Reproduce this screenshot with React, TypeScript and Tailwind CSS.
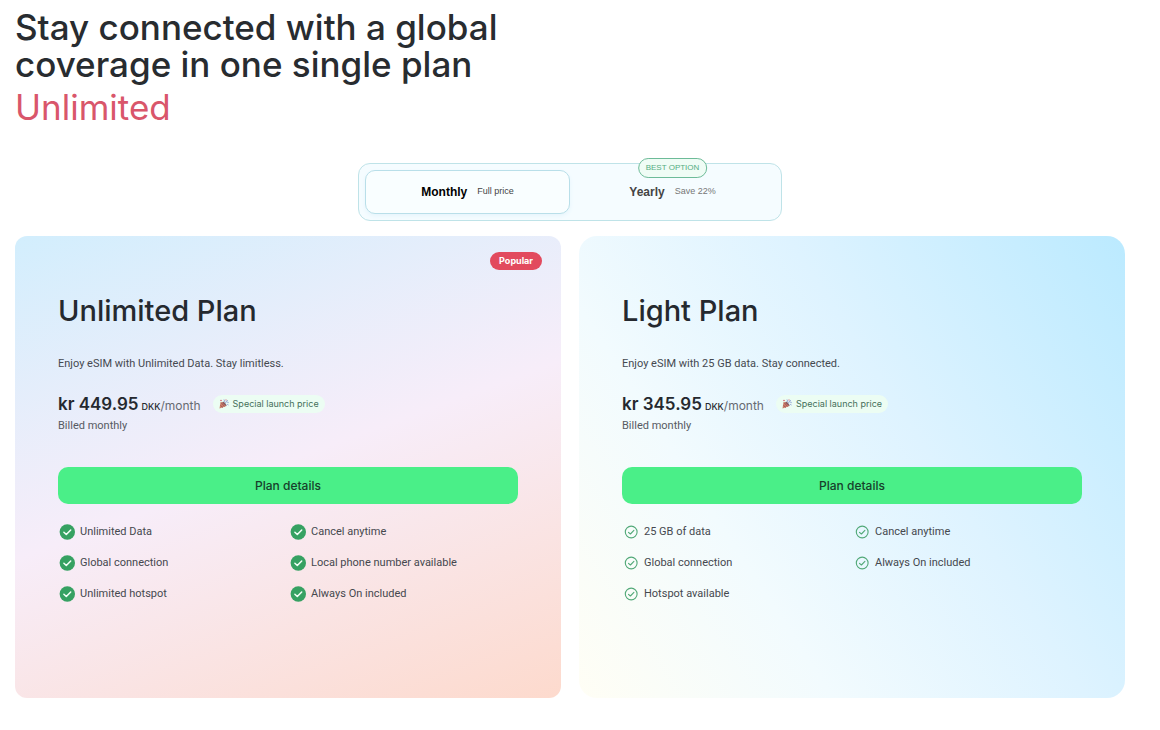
import { useState } from "react";
import clsx from "clsx";

type Plan = {
  name: string;
  description: string;
  price: string;
  popular?: boolean;
  features: string[];
};

const PLANS: Plan[] = [
  {
    name: "Unlimited Plan",
    description: "Enjoy eSIM with Unlimited Data. Stay limitless.",
    price: "kr 449.95",
    popular: true,
    features: [
      "Unlimited Data",
      "Cancel anytime",
      "Global connection",
      "Local phone number available",
      "Unlimited hotspot",
      "Always On included",
    ],
  },
  {
    name: "Light Plan",
    description: "Enjoy eSIM with 25 GB data. Stay connected.",
    price: "kr 345.95",
    features: [
      "25 GB of data",
      "Cancel anytime",
      "Global connection",
      "Always On included",
      "Hotspot available",
    ],
  },
];

const PERIODS = [
  { value: "monthly", label: "Monthly", note: "Full price" },
  { value: "yearly", label: "Yearly", note: "Save 22%", badge: "BEST OPTION" },
];

function SolidCheck() {
  return (
    <svg viewBox="0 0 16 16" className="size-4 shrink-0" aria-hidden="true">
      <circle cx="8.3" cy="8" r="7.7" fill="#36a162" />
      <path d="M4.9 8.2 7.3 10.5 11.7 6" fill="none" stroke="#f3fff7" strokeWidth="1.5" strokeLinecap="round" strokeLinejoin="round" />
    </svg>
  );
}

function OutlineCheck() {
  return (
    <svg viewBox="0 0 14 14" className="size-3.5 shrink-0" aria-hidden="true">
      <circle cx="7.2" cy="7" r="5.9" fill="none" stroke="#52a978" strokeWidth="1.1" />
      <path d="M4.5 7.3 6.4 9 9.9 5.4" fill="none" stroke="#52a978" strokeWidth="1.1" strokeLinecap="round" strokeLinejoin="round" />
    </svg>
  );
}

function PartyPopper() {
  return (
    <svg viewBox="0 0 20 20" className="size-2.5 shrink-0" aria-hidden="true">
      <path d="M1 19 3 6Q13 6 15 14Z" fill="#c98068" />
      <path d="M3 13 8 17M5 8l6 7" stroke="#a8525a" strokeWidth="2" />
      <path d="M7 6Q9 4 12 8t3 6Q12 13 9 10T7 6Z" fill="#8a5a60" />
      <path d="M10 6Q12 4 10 1M13 9q0-5 5-6M15 12q2-2 4 0" fill="none" stroke="#8ea0d6" strokeWidth="2" />
      <circle cx="4" cy="3" r="1.6" fill="#cf5a6a" />
      <circle cx="14" cy="2" r="1.3" fill="#d9838f" />
      <circle cx="18" cy="7" r="1.3" fill="#8ea0d6" />
    </svg>
  );
}

function PlanCard({ plan }: { plan: Plan }) {
  return (
    <article
      className={clsx(
        "relative px-[43px] pt-[57px] pb-24",
        plan.popular
          ? "rounded-xl bg-[linear-gradient(160deg,#d2eefd_0%,#f7edf9_49%,#fddacd_100%)]"
          : "rounded-[18px] bg-[linear-gradient(57deg,#fffef5_0%,#f2fbfe_30%,#def3ff_60%,#bbeaff_100%)]"
      )}
    >
      {plan.popular && (
        <span className="absolute top-4 right-[19px] rounded-full bg-[#e24a5e] px-[9px] text-[9px] leading-[18px] font-bold text-white">
          Popular
        </span>
      )}

      <h2 className="text-[29px] leading-9 font-medium text-[#25292f]">{plan.name}</h2>
      <p className="mt-[27px] font-['Roboto',sans-serif] text-[11px] leading-4 text-[#454950]">{plan.description}</p>

      <div className="mt-5 flex items-center gap-3">
        <p className="flex items-baseline text-[#25292f]">
          <span className="mr-[3px] text-[17px] leading-6 font-semibold">{plan.price}</span>
          <span className="text-[9px] font-medium">DKK</span>
          <span className="text-xs text-[#666a72]">/month</span>
        </p>
        <span className="flex items-center gap-1 rounded-full bg-[#ecfdf3] px-1.5 text-[9px] leading-[18px] text-[#45705a]">
          <PartyPopper />
          Special launch price
        </span>
      </div>
      <p className="mt-0.5 font-['Roboto',sans-serif] text-[11px] leading-4 text-[#565a62]">Billed monthly</p>

      <button type="button" className="mt-[33px] h-[37px] w-full rounded-[10px] bg-[#4aef88] text-xs font-medium text-[#17402b]">
        Plan details
      </button>

      <ul className="mt-5 grid grid-cols-2 gap-x-0.5 gap-y-[15px] font-['Roboto',sans-serif] text-[11px] leading-4 text-[#45484e]">
        {plan.features.map((f) => (
          <li key={f} className={clsx("flex items-center", plan.popular ? "gap-[5px] pl-px" : "gap-1.5 pl-0.5")}>
            {plan.popular ? <SolidCheck /> : <OutlineCheck />}
            {f}
          </li>
        ))}
      </ul>
    </article>
  );
}

export default function App() {
  const [period, setPeriod] = useState("monthly");

  return (
    <main className="min-h-screen bg-white pt-[9px] pr-[35px] pb-8 pl-[15px] font-['Inter',sans-serif]">
      <h1 className="text-[35px] leading-[37px] font-medium text-[#282c30]">
        Stay connected with a global
        <br />
        coverage in one single plan
      </h1>
      <p className="mt-1.5 text-[35px] leading-[37px] text-[#d9566b]">Unlimited</p>

      <div className="mx-auto mt-[37px] grid max-w-[424px] grid-cols-2 rounded-xl border border-[#bfe3e8] bg-[#f5fcff] p-1.5 font-['Liberation_Sans',sans-serif]">
        {PERIODS.map((p) => (
          <button
            key={p.value}
            type="button"
            aria-pressed={period === p.value}
            onClick={() => setPeriod(p.value)}
            className={clsx(
              "relative flex h-11 items-center justify-center gap-2.5 rounded-[10px] border",
              period === p.value
                ? "border-[#b9dfe9] bg-[#f9feff] text-black shadow-[0_2px_4px_#e6f5fc]"
                : "border-transparent text-[#444]"
            )}
          >
            <span className="text-xs font-bold">{p.label}</span>
            <span className={clsx("text-[9px]", period === p.value ? "text-[#444]" : "text-[#777]")}>{p.note}</span>
            {p.badge && (
              <span className="absolute -top-[13px] left-1/2 -translate-x-1/2 rounded-full border border-[#6dbb98] bg-[#effcf5] px-[7px] text-[8px] leading-[18px] whitespace-nowrap text-[#54ad82]">
                {p.badge}
              </span>
            )}
          </button>
        ))}
      </div>

      <div className="mt-[15px] grid grid-cols-2 gap-[18px]">
        {PLANS.map((plan) => (
          <PlanCard key={plan.name} plan={plan} />
        ))}
      </div>
    </main>
  );
}
